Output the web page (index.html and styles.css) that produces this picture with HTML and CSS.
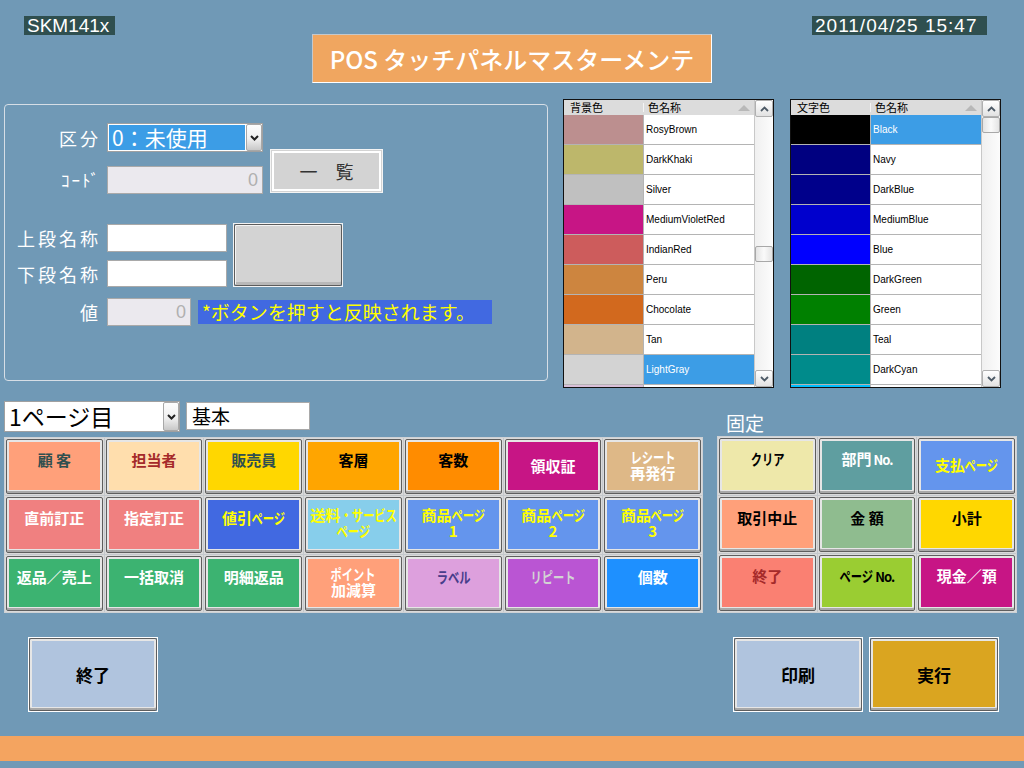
FILE: index.html
```html
<!DOCTYPE html>
<html lang="ja">
<head>
<meta charset="utf-8">
<title>POS タッチパネルマスターメンテ</title>
<link rel="stylesheet" href="styles.css">
</head>
<body>
<div class="page">
  <div class="top">
    <div class="tag tag-id">SKM141x</div>
    <div class="title">POS タッチパネルマスターメンテ</div>
    <div class="tag tag-date">2011/04/25 15:47</div>
  </div>

  <div class="mid">
    <div class="panel">
      <div class="row row-a">
        <div class="lbl">区分</div>
        <div class="select sel-kubun">
          <div class="sel-val">0：未使用</div>
          <div class="dd"><svg width="9" height="6" viewBox="0 0 9 6"><path d="M1 1l3.5 3.5L8 1" stroke="#222" stroke-width="2" fill="none"/></svg></div>
        </div>
      </div>
      <div class="row row-b">
        <div class="lbl lbl-code">ｺｰﾄﾞ</div>
        <div class="input disabled code">0</div>
        <div class="btn-list">一　覧</div>
      </div>
      <div class="row row-cd">
        <div class="pair">
          <div class="row pr1"><div class="lbl">上段名称</div><div class="input name"></div></div>
          <div class="row pr2"><div class="lbl">下段名称</div><div class="input name name2"></div></div>
        </div>
        <div class="btn-preview"><div class="pv"></div></div>
      </div>
      <div class="row row-e">
        <div class="lbl">値</div>
        <div class="input disabled val">0</div>
        <div class="hint">*ボタンを押すと反映されます。</div>
      </div>
    </div>

    <div class="list list-bg">
      <div class="tbl">
        <div class="thead"><div class="th1">背景色</div><div class="th2">色名称<span class="tri"></span></div></div>
        <div class="tr"><div class="sw" style="background:#bc8f8f"></div><div class="nm">RosyBrown</div></div>
        <div class="tr"><div class="sw" style="background:#bdb76b"></div><div class="nm">DarkKhaki</div></div>
        <div class="tr"><div class="sw" style="background:#c0c0c0"></div><div class="nm">Silver</div></div>
        <div class="tr"><div class="sw" style="background:#c71585"></div><div class="nm">MediumVioletRed</div></div>
        <div class="tr"><div class="sw" style="background:#cd5c5c"></div><div class="nm">IndianRed</div></div>
        <div class="tr"><div class="sw" style="background:#cd853f"></div><div class="nm">Peru</div></div>
        <div class="tr"><div class="sw" style="background:#d2691e"></div><div class="nm">Chocolate</div></div>
        <div class="tr"><div class="sw" style="background:#d2b48c"></div><div class="nm">Tan</div></div>
        <div class="tr sel"><div class="sw" style="background:#d3d3d3"></div><div class="nm">LightGray</div></div>
        <div class="tr"><div class="sw" style="background:#d8bfd8"></div><div class="nm"></div></div>
      </div>
      <div class="sb">
        <div class="sbb"><svg width="9" height="6" viewBox="0 0 9 6"><path d="M1 5l3.5-3.5L8 5" stroke="#4d5a66" stroke-width="1.8" fill="none"/></svg></div>
        <div class="thumb thumb-bg"></div>
        <div class="sbb"><svg width="9" height="6" viewBox="0 0 9 6"><path d="M1 1l3.5 3.5L8 1" stroke="#4d5a66" stroke-width="1.8" fill="none"/></svg></div>
      </div>
    </div>

    <div class="list list-fg">
      <div class="tbl">
        <div class="thead"><div class="th1">文字色</div><div class="th2">色名称<span class="tri"></span></div></div>
        <div class="tr sel"><div class="sw" style="background:#000000"></div><div class="nm">Black</div></div>
        <div class="tr"><div class="sw" style="background:#000080"></div><div class="nm">Navy</div></div>
        <div class="tr"><div class="sw" style="background:#00008b"></div><div class="nm">DarkBlue</div></div>
        <div class="tr"><div class="sw" style="background:#0000cd"></div><div class="nm">MediumBlue</div></div>
        <div class="tr"><div class="sw" style="background:#0000ff"></div><div class="nm">Blue</div></div>
        <div class="tr"><div class="sw" style="background:#006400"></div><div class="nm">DarkGreen</div></div>
        <div class="tr"><div class="sw" style="background:#008000"></div><div class="nm">Green</div></div>
        <div class="tr"><div class="sw" style="background:#008080"></div><div class="nm">Teal</div></div>
        <div class="tr"><div class="sw" style="background:#008b8b"></div><div class="nm">DarkCyan</div></div>
        <div class="tr"><div class="sw" style="background:#00bfff"></div><div class="nm"></div></div>
      </div>
      <div class="sb">
        <div class="sbb"><svg width="9" height="6" viewBox="0 0 9 6"><path d="M1 5l3.5-3.5L8 5" stroke="#4d5a66" stroke-width="1.8" fill="none"/></svg></div>
        <div class="thumb thumb-fg"></div>
        <div class="sbb"><svg width="9" height="6" viewBox="0 0 9 6"><path d="M1 1l3.5 3.5L8 1" stroke="#4d5a66" stroke-width="1.8" fill="none"/></svg></div>
      </div>
    </div>
  </div>

  <div class="lower">
    <div class="lower-left">
      <div class="controls">
        <div class="select sel-page">
          <div class="sel-val">1ページ目</div>
          <div class="dd"><svg width="9" height="6" viewBox="0 0 9 6"><path d="M1 1l3.5 3.5L8 1" stroke="#222" stroke-width="2" fill="none"/></svg></div>
        </div>
        <div class="input kihon">基本</div>
      </div>
      <div class="grid grid-main">
        <div class="cell"><div class="key"><div class="face c-salmon t-slate">顧 客</div></div></div>
        <div class="cell"><div class="key"><div class="face c-navajo t-brown">担当者</div></div></div>
        <div class="cell"><div class="key"><div class="face c-gold t-slate">販売員</div></div></div>
        <div class="cell"><div class="key"><div class="face c-orange t-black">客層</div></div></div>
        <div class="cell"><div class="key"><div class="face c-dkorange t-black">客数</div></div></div>
        <div class="cell"><div class="key"><div class="face c-mvred t-white mid-t">領収証</div></div></div>
        <div class="cell"><div class="key"><div class="face c-burly t-white two"><span class="hw hw4">レシート</span><br>再発行</div></div></div>

        <div class="cell"><div class="key"><div class="face c-lcoral t-white">直前訂正</div></div></div>
        <div class="cell"><div class="key"><div class="face c-lcoral t-white">指定訂正</div></div></div>
        <div class="cell"><div class="key"><div class="face c-royal t-yellow">値引<span class="hw hw3">ページ</span></div></div></div>
        <div class="cell"><div class="key"><div class="face c-sky t-yellow two">送料<span class="hw hw5">・サービス</span><br><span class="hw hw3">ページ</span></div></div></div>
        <div class="cell"><div class="key"><div class="face c-corn t-yellow two">商品<span class="hw hw3">ページ</span><br>1</div></div></div>
        <div class="cell"><div class="key"><div class="face c-corn t-yellow two">商品<span class="hw hw3">ページ</span><br>2</div></div></div>
        <div class="cell"><div class="key"><div class="face c-corn t-yellow two">商品<span class="hw hw3">ページ</span><br>3</div></div></div>

        <div class="cell"><div class="key"><div class="face c-msgreen t-white">返品／売上</div></div></div>
        <div class="cell"><div class="key"><div class="face c-msgreen t-white">一括取消</div></div></div>
        <div class="cell"><div class="key"><div class="face c-msgreen t-white">明細返品</div></div></div>
        <div class="cell"><div class="key"><div class="face c-salmon t-white two"><span class="hw hw4">ポイント</span><br>加減算</div></div></div>
        <div class="cell"><div class="key"><div class="face c-plum t-dslate"><span class="hw hw3">ラベル</span></div></div></div>
        <div class="cell"><div class="key"><div class="face c-morchid t-lgray"><span class="hw hw4">リピート</span></div></div></div>
        <div class="cell"><div class="key"><div class="face c-dodger t-white">個数</div></div></div>
      </div>
    </div>
    <div class="lower-right">
      <div class="fixed-lbl">固定</div>
      <div class="grid grid-fixed">
        <div class="cell"><div class="key"><div class="face c-pgold t-black"><span class="hw hw3">クリア</span></div></div></div>
        <div class="cell"><div class="key"><div class="face c-cadet t-white">部門<span class="no">No.</span></div></div></div>
        <div class="cell"><div class="key"><div class="face c-corn t-yellow mid-t">支払<span class="hw hw3">ページ</span></div></div></div>
        <div class="cell"><div class="key"><div class="face c-salmon t-black">取引中止</div></div></div>
        <div class="cell"><div class="key"><div class="face c-dsgreen t-black">金 額</div></div></div>
        <div class="cell"><div class="key"><div class="face c-gold t-black">小計</div></div></div>
        <div class="cell"><div class="key"><div class="face c-salmon2 t-brown">終了</div></div></div>
        <div class="cell"><div class="key"><div class="face c-ygreen t-black"><span class="hw hw3">ページ</span><span class="no">No.</span></div></div></div>
        <div class="cell"><div class="key"><div class="face c-mvred t-white">現金／預</div></div></div>
      </div>
    </div>
  </div>

  <div class="bottom">
    <div class="bigbtn b-end"><div class="key"><div class="bface c-lsteel">終了</div></div></div>
    <div class="bigbtn b-print"><div class="key"><div class="bface c-lsteel">印刷</div></div></div>
    <div class="bigbtn b-exec"><div class="key"><div class="bface c-goldenrod">実行</div></div></div>
  </div>

  <div class="bar"></div>
</div>
</body>
</html>
```

FILE: styles.css
```css
* { box-sizing: border-box; }
html, body { margin: 0; padding: 0; }
body {
  background: #7099b6;
  font-family: "Noto Sans CJK JP", "Liberation Sans", sans-serif;
}
.page {
  width: 1024px;
  height: 768px;
  overflow: hidden;
  background: #7099b6;
}

/* top */
.top { display: flex; align-items: flex-start; height: 99px; }
.tag {
  background: #2f4f4f;
  color: #fff;
  font-family: "Liberation Sans", sans-serif;
  font-size: 19px;
  line-height: 19px;
  height: 19px;
  margin-top: 16px;
  padding-left: 3px;
  white-space: nowrap;
}
.tag-id { margin-left: 24px; width: 91px; }
.tag-date { margin-left: auto; margin-right: 37px; width: 175px; letter-spacing: 1px; }
.title {
  margin-left: 197px;
  margin-top: 34px;
  width: 400px;
  height: 49px;
  background: #f0a660;
  border: 1px solid #fff;
  border-top-color: #c4c8cc;
  border-left-color: #c4c8cc;
  color: #fff;
  font-size: 24px;
  font-weight: 500;
  display: flex;
  align-items: center;
  justify-content: center;
  white-space: nowrap;
}

/* mid */
.mid { display: flex; align-items: flex-start; height: 289px; }
.panel {
  margin: 5px 0 0 4px;
  width: 544px;
  height: 277px;
  border: 1px solid #d6dee6;
  border-radius: 4px;
  padding-top: 18px;
}
.row { display: flex; align-items: center; }
.lbl {
  width: 96px;
  margin-right: 6px;
  text-align: right;
  color: #fff;
  font-size: 18px;
  line-height: 22px;
  letter-spacing: 3px;
  white-space: nowrap;
}
.lbl-code { font-size: 17px; letter-spacing: 2px; }
.input {
  background: #fff;
  border: 1px solid #a9a9a9;
}
.disabled {
  background: #ebe9ee;
  color: #b0b0b0;
  text-align: right;
  font-family: "Liberation Sans", sans-serif;
  font-size: 18px;
  line-height: 26px;
  padding-right: 4px;
}
.select { display: flex; border: 1px solid #a0a0a0; background: #fff; }
.sel-val { flex: 1; white-space: nowrap; display: flex; align-items: center; }
.dd {
  width: 16px;
  flex: none;
  background: linear-gradient(#fdfdfd, #f0f0f0 55%, #c8c8c8);
  border: 1px solid #a8a8a8;
  border-radius: 2px;
  display: flex;
  align-items: center;
  justify-content: center;
}
.row-a { height: 29px; }
.sel-kubun { width: 156px; height: 29px; }
.sel-kubun .sel-val {
  background: #3c9de6;
  color: #fff;
  margin: 1px;
  font-size: 21px;
  line-height: 25px;
  padding-left: 3px;
}
.row-b { margin-top: 14px; align-items: flex-start; }
.row-b .lbl { margin-top: 3px; }
.code { width: 156px; height: 28px; }
.btn-list {
  margin-left: 7px;
  margin-top: -17px;
  width: 113px;
  height: 44px;
  border: 1px solid #f4f4f4;
  background: #d3d3d3;
  box-shadow: inset 0 0 0 1px #d3d3d3, inset 0 0 0 3px #fff;
  color: #333;
  font-size: 18px;
  display: flex;
  align-items: center;
  justify-content: center;
}
.row-cd { margin-top: 29px; align-items: flex-start; }
.pair { display: flex; flex-direction: column; }
.pr1 { margin-top: 1px; }
.pr2 { margin-top: 8px; }
.name { width: 120px; height: 28px; }
.name2 { height: 27px; }
.btn-preview {
  margin-left: 6px;
  width: 110px;
  height: 64px;
  border: 1px solid #f2f2f2;
}
.pv {
  height: 100%;
  border: 1px solid #5c5c5c;
  border-radius: 2px;
  background: #d3d3d3;
  box-shadow: inset 1px 1px 0 #f4f4f4, inset 0 -3px 0 #b8b8b8;
}
.row-e { margin-top: 11px; }
.val { width: 84px; height: 28px; }
.hint {
  margin-left: 7px;
  width: 294px;
  height: 24px;
  background: #4169e1;
  color: #ffff00;
  font-size: 19px;
  line-height: 24px;
  padding-left: 4px;
  white-space: nowrap;
}

/* lists */
.list {
  width: 211px;
  height: 289px;
  border: 1px solid #111;
  display: flex;
  background: #fff;
}
.list-bg { margin-left: 15px; }
.list-fg { margin-left: 16px; }
.tbl { flex: 1; display: flex; flex-direction: column; overflow: hidden; }
.thead {
  flex: none;
  height: 15px;
  display: flex;
  background: #dcdcdc;
  font-size: 11px;
  line-height: 15px;
  color: #000;
}
.th1 { width: 80px; padding-left: 6px; position: relative; }
.th1::after {
  content: "";
  position: absolute;
  right: 0;
  top: 3px;
  height: 9px;
  border-right: 1px solid #f4f4f4;
}
.th2 { flex: 1; padding-left: 4px; position: relative; }
.tri {
  position: absolute;
  right: 4px;
  top: 5px;
  width: 0;
  height: 0;
  border-left: 6px solid transparent;
  border-right: 6px solid transparent;
  border-bottom: 6px solid #b8b8b8;
}
.tr { display: flex; height: 30px; flex: none; }
.sw { width: 80px; border-bottom: 1px solid #b4b4b4; border-right: 1px solid #b4b4b4; }
.nm {
  flex: 1;
  border-bottom: 1px solid #b4b4b4;
  font-family: "Liberation Sans", sans-serif;
  font-size: 10px;
  color: #000;
  display: flex;
  align-items: center;
  padding-left: 2px;
}
.sel .nm { background: #3c9de6; color: #fff; }
.sb {
  width: 19px;
  border-left: 1px solid #c8c8c8;
  background: linear-gradient(to right, #f0f0f0, #fcfcfc);
  position: relative;
  display: flex;
  flex-direction: column;
  justify-content: space-between;
}
.sbb {
  height: 17px;
  border: 1px solid #b0b0b0;
  border-radius: 2px;
  background: linear-gradient(#ffffff, #e2e2e2);
  display: flex;
  align-items: center;
  justify-content: center;
}
.thumb {
  position: absolute;
  left: 0;
  right: 0;
  height: 16px;
  border: 1px solid #a8a8a8;
  border-radius: 2px;
  background: linear-gradient(to right, #e4e4e4, #fafafa 50%, #e4e4e4);
}
.thumb-bg { top: 146px; }
.thumb-fg { top: 17px; }

/* lower */
.lower { display: flex; height: 225px; }
.lower-left { margin-left: 4px; width: 699px; }
.controls { display: flex; margin-top: 13px; height: 31px; align-items: flex-start; }
.sel-page { width: 176px; height: 31px; }
.sel-page .sel-val {
  font-size: 23px;
  line-height: 29px;
  padding-left: 4px;
  color: #000;
}
.kihon {
  margin-left: 6px;
  margin-top: 1px;
  width: 124px;
  height: 28px;
  font-size: 19px;
  line-height: 26px;
  padding-left: 5px;
  color: #000;
}
.grid {
  display: grid;
  grid-template-rows: repeat(3, 1fr);
  gap: 1px;
  background: #c4c8cc;
  border: 1px solid #cdd1d5;
}
.grid-main { margin-top: 5px; height: 176px; grid-template-columns: repeat(7, 1fr); }
.lower-right { margin-left: 14px; width: 300px; }
.fixed-lbl {
  margin-top: 25px;
  margin-left: 9px;
  height: 19px;
  color: #fff;
  font-size: 19px;
  line-height: 19px;
}
.grid-fixed { margin-top: 4px; height: 177px; grid-template-columns: repeat(3, 1fr); }
.cell { background: #dadada; padding: 1px; min-width: 0; min-height: 0; }
.key {
  height: 100%;
  border: 1px solid #5e5e5e;
  border-radius: 2px;
  background: #e6e6e6;
  padding: 2px 2px 3px 2px;
  box-shadow: inset 0 -2px 0 #a8a8a8;
}
.face {
  height: 100%;
  text-align: center;
  font-weight: 700;
  font-size: 15px;
  line-height: 16px;
  padding-top: 10px;
  white-space: nowrap;
}
.face.two { line-height: 16px; padding-top: 7px; }
.face.mid-t { padding-top: 16px; }
.hw { display: inline-block; transform: scaleX(0.75); }
.hw3 { margin: 0 -5.6px; }
.hw4 { margin: 0 -7.5px; }
.hw5 { margin: 0 -9.4px; }
.no { font-size: 13px; letter-spacing: -1px; margin-left: 2px; }

.c-salmon { background: #ffa07a; }
.c-salmon2 { background: #fa8072; }
.c-navajo { background: #ffdead; }
.c-gold { background: #ffd700; }
.c-orange { background: #ffa500; }
.c-dkorange { background: #ff8c00; }
.c-mvred { background: #c71585; }
.c-burly { background: #deb887; }
.c-lcoral { background: #f08080; }
.c-royal { background: #4169e1; }
.c-sky { background: #87ceeb; }
.c-corn { background: #6495ed; }
.c-msgreen { background: #3cb371; }
.c-plum { background: #dda0dd; }
.c-morchid { background: #ba55d3; }
.c-dodger { background: #1e90ff; }
.c-pgold { background: #eee8aa; }
.c-cadet { background: #5f9ea0; }
.c-dsgreen { background: #8fbc8f; }
.c-ygreen { background: #9acd32; }
.c-lsteel { background: #b0c4de; }
.c-goldenrod { background: #daa520; }

.t-slate { color: #2f4f4f; }
.t-brown { color: #a52a2a; }
.t-black { color: #000; }
.t-white { color: #fff; }
.t-yellow { color: #ffff00; }
.t-dslate { color: #483d8b; }
.t-lgray { color: #d3d3d3; }

/* bottom */
.bottom { display: flex; margin-top: 24px; height: 75px; }
.bigbtn { width: 130px; height: 75px; border: 1px solid #fff; }
.bface {
  height: 100%;
  display: flex;
  align-items: center;
  justify-content: center;
  font-weight: 700;
  font-size: 17px;
  color: #000;
}
.b-end { margin-left: 28px; }
.b-print { margin-left: auto; }
.b-exec { margin-left: 6px; margin-right: 25px; }
.bar { margin-top: 24px; height: 25px; background: #f4a460; }
```
